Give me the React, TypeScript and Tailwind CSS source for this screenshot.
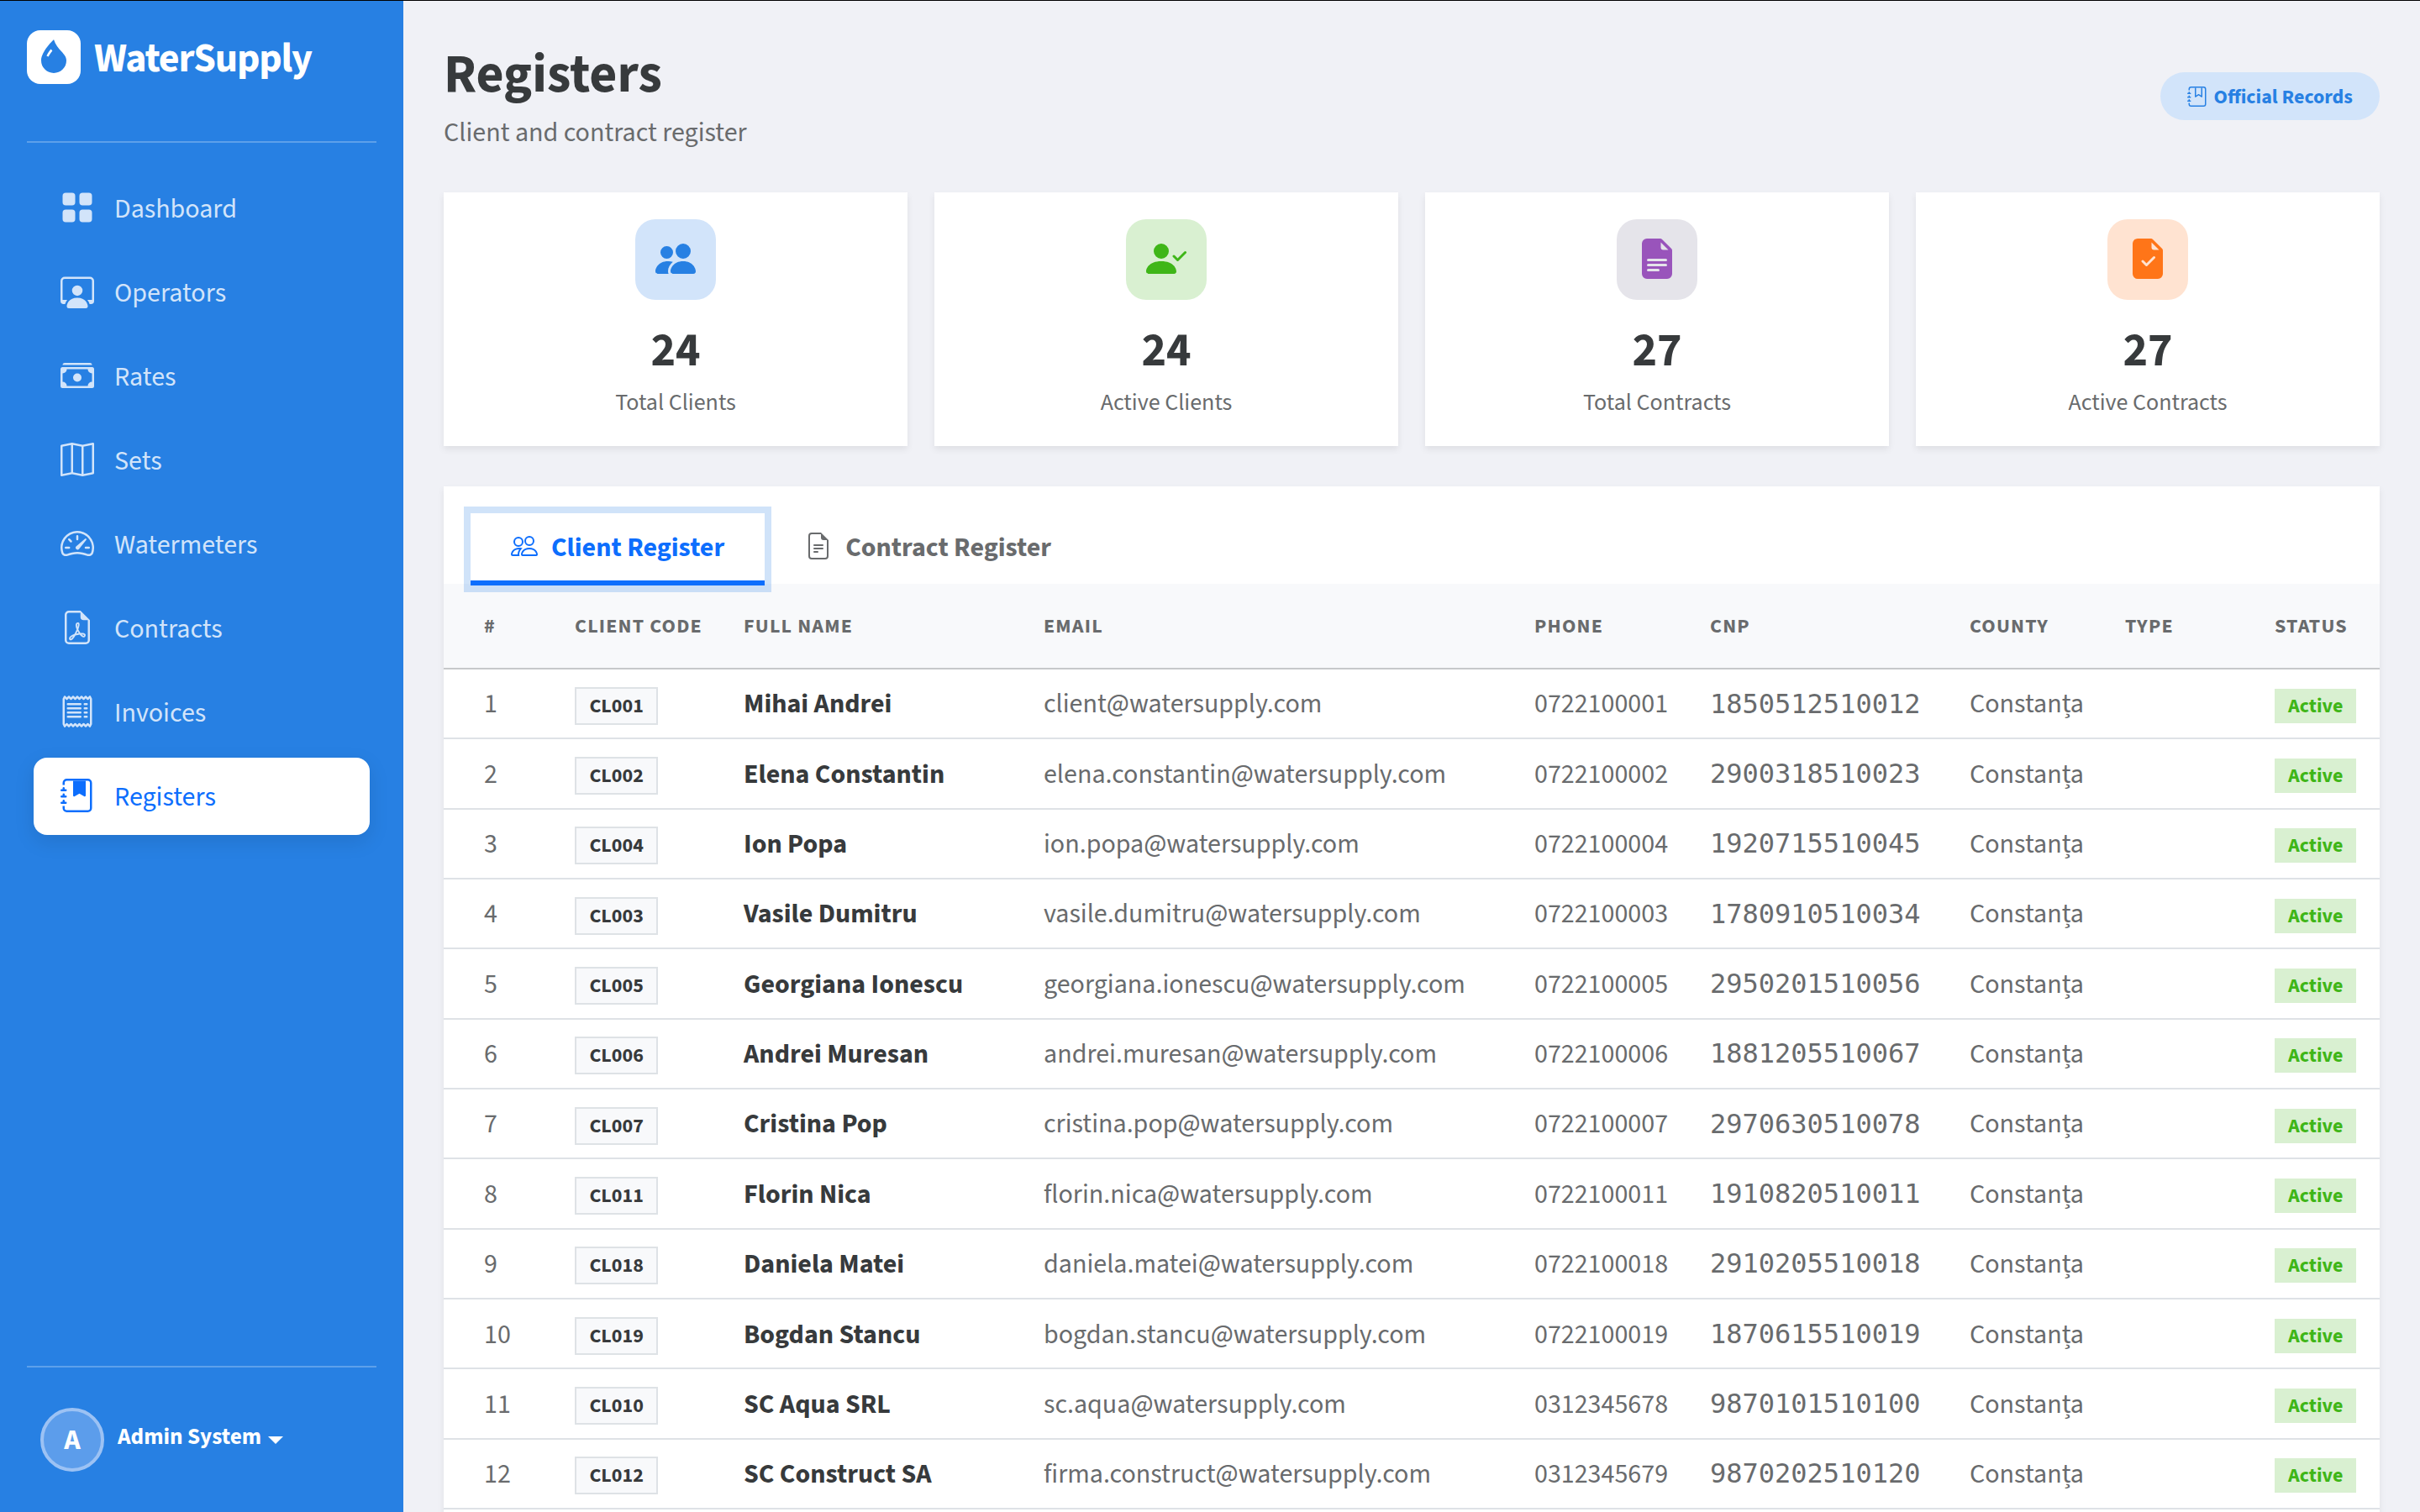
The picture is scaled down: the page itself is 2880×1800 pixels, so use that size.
import React, { useState } from 'react';
import type { IconType } from 'react-icons';
import {
  BsCashStack,
  BsDropletFill,
  BsFileEarmarkCheckFill,
  BsFileEarmarkPdf,
  BsFileEarmarkText,
  BsFileEarmarkTextFill,
  BsGridFill,
  BsJournalBookmark,
  BsJournalBookmarkFill,
  BsMap,
  BsPeople,
  BsPeopleFill,
  BsPersonCheckFill,
  BsPersonWorkspace,
  BsReceipt,
  BsSpeedometer2,
} from 'react-icons/bs';

const NAV_ITEMS: { label: string; icon: IconType }[] = [
  { label: 'Dashboard', icon: BsGridFill },
  { label: 'Operators', icon: BsPersonWorkspace },
  { label: 'Rates', icon: BsCashStack },
  { label: 'Sets', icon: BsMap },
  { label: 'Watermeters', icon: BsSpeedometer2 },
  { label: 'Contracts', icon: BsFileEarmarkPdf },
  { label: 'Invoices', icon: BsReceipt },
  { label: 'Registers', icon: BsJournalBookmarkFill },
];

const STATS: { label: string; value: number; icon: IconType; tone: string }[] = [
  { label: 'Total Clients', value: 24, icon: BsPeopleFill, tone: 'bg-[#d2e4fa] text-[#2780e3]' },
  { label: 'Active Clients', value: 24, icon: BsPersonCheckFill, tone: 'bg-[#d9f0d1] text-[#3fb618]' },
  { label: 'Total Contracts', value: 27, icon: BsFileEarmarkTextFill, tone: 'bg-[#e5e4ea] text-[#9954bb]' },
  { label: 'Active Contracts', value: 27, icon: BsFileEarmarkCheckFill, tone: 'bg-[#ffe3d1] text-[#ff7518]' },
];

const TABS: { label: string; icon: IconType }[] = [
  { label: 'Client Register', icon: BsPeople },
  { label: 'Contract Register', icon: BsFileEarmarkText },
];

const COLUMNS = ['#', 'Client Code', 'Full Name', 'Email', 'Phone', 'CNP', 'County', 'Type', 'Status'];

const CLIENTS = [
  { code: 'CL001', name: 'Mihai Andrei', email: 'client@watersupply.com', phone: '0722100001', cnp: '1850512510012' },
  { code: 'CL002', name: 'Elena Constantin', email: 'elena.constantin@watersupply.com', phone: '0722100002', cnp: '2900318510023' },
  { code: 'CL004', name: 'Ion Popa', email: 'ion.popa@watersupply.com', phone: '0722100004', cnp: '1920715510045' },
  { code: 'CL003', name: 'Vasile Dumitru', email: 'vasile.dumitru@watersupply.com', phone: '0722100003', cnp: '1780910510034' },
  { code: 'CL005', name: 'Georgiana Ionescu', email: 'georgiana.ionescu@watersupply.com', phone: '0722100005', cnp: '2950201510056' },
  { code: 'CL006', name: 'Andrei Muresan', email: 'andrei.muresan@watersupply.com', phone: '0722100006', cnp: '1881205510067' },
  { code: 'CL007', name: 'Cristina Pop', email: 'cristina.pop@watersupply.com', phone: '0722100007', cnp: '2970630510078' },
  { code: 'CL011', name: 'Florin Nica', email: 'florin.nica@watersupply.com', phone: '0722100011', cnp: '1910820510011' },
  { code: 'CL018', name: 'Daniela Matei', email: 'daniela.matei@watersupply.com', phone: '0722100018', cnp: '2910205510018' },
  { code: 'CL019', name: 'Bogdan Stancu', email: 'bogdan.stancu@watersupply.com', phone: '0722100019', cnp: '1870615510019' },
  { code: 'CL010', name: 'SC Aqua SRL', email: 'sc.aqua@watersupply.com', phone: '0312345678', cnp: '9870101510100' },
  { code: 'CL012', name: 'SC Construct SA', email: 'firma.construct@watersupply.com', phone: '0312345679', cnp: '9870202510120' },
];

const GRID = 'grid grid-cols-[108px_201px_357px_584px_209px_309px_185px_178px_1fr] items-center pl-12';

const Sidebar: React.FC = () => (
  <aside className="flex w-[480px] shrink-0 flex-col bg-[#2780e3] text-white">
    <div className="mx-8 flex h-[169px] items-start gap-4 border-b-2 border-white/25 pt-[35px]">
      <div className="flex size-16 items-center justify-center rounded-2xl bg-white text-[#2780e3]">
        <BsDropletFill className="-mt-0.5 size-10" />
      </div>
      <span className="pt-0.5 text-[48px] leading-16 font-bold tracking-[-1.2px]">WaterSupply</span>
    </div>

    <nav className="mt-8 flex flex-col gap-2 px-10">
      {NAV_ITEMS.map(({ label, icon: Icon }) => {
        const active = label === 'Registers';
        return (
          <a
            key={label}
            href="#"
            className={`flex h-[92px] items-center gap-6 rounded-2xl px-8 text-[32px] ${
              active
                ? 'bg-white text-[#0d6efd] shadow-[0_8px_24px_rgba(0,0,0,0.1)]'
                : 'text-[#d2e4fa]'
            }`}
          >
            <Icon className="-mt-0.5 size-10" />
            <span className="pt-0.5">{label}</span>
          </a>
        );
      })}
    </nav>

    <div className="mx-8 mt-auto flex h-[174px] items-start border-t-2 border-white/25 px-4 pt-12">
      <div className="flex size-[76px] items-center justify-center rounded-full border-4 border-[#9cc2f4] bg-[#5c9deb] text-[34px] font-bold">
        A
      </div>
      <span className="ml-4 pt-4 text-[27.2px] leading-[38px] font-bold">Admin System</span>
      <svg className="mt-[34px] ml-2 h-[9px] w-[18px]" viewBox="0 0 18 9" fill="currentColor">
        <path d="M0 0h18L9 9z" />
      </svg>
    </div>
  </aside>
);

const StatCards: React.FC = () => (
  <div className="grid grid-cols-4 gap-8">
    {STATS.map(({ label, value, icon: Icon, tone }) => (
      <div
        key={label}
        className="flex h-[302px] flex-col items-center bg-white pt-8 shadow-[0_4px_8px_rgba(0,0,0,0.075)]"
      >
        <div className={`flex size-24 items-center justify-center rounded-3xl ${tone}`}>
          <Icon className="-mt-0.5 size-12" />
        </div>
        <div className="mt-[27px] text-[56px] leading-[67px] font-bold">{value}</div>
        <div className="mt-[7px] text-[28px] leading-[42px] text-[#696b6d]">{label}</div>
      </div>
    ))}
  </div>
);

const ClientTable: React.FC = () => (
  <div className="text-[32px] text-[#696b6d]">
    <div className={`${GRID} h-[102px] border-b-2 border-[#c6c8ca] bg-[#f8f9fb]`}>
      {COLUMNS.map((col) => (
        <div key={col} className="pt-0.5 text-[24px] font-bold tracking-[1.2px] whitespace-nowrap uppercase">
          {col}
        </div>
      ))}
    </div>
    {CLIENTS.map((client, i) => (
      <div key={client.code} className={`${GRID} h-[83.35px] border-b-2 border-[#dee2e6] leading-[48px]`}>
        <div className="pt-[1.5px]">{i + 1}</div>
        <div className="flex pt-[5px]">
          <span className="border-2 border-[#dee2e6] bg-[#f8f9fb] px-[15.4px] pt-px text-[24px] leading-10 font-bold text-[#373a3c]">
            {client.code}
          </span>
        </div>
        <div className="pt-[1.5px] font-bold text-[#373a3c]">{client.name}</div>
        <div className="pt-[1.5px]">{client.email}</div>
        <div className="pt-[1.5px]">{client.phone}</div>
        <div className="font-['DejaVu_Sans_Mono',monospace]">{client.cnp}</div>
        <div className="pt-[1.5px]">Constanța</div>
        <div />
        <div className="flex pt-[5px]">
          <span className="bg-[#d9f0d1] px-4 pt-px text-[24px] leading-10 font-bold text-[#3fb618]">Active</span>
        </div>
      </div>
    ))}
  </div>
);

const App: React.FC = () => {
  const [tab, setTab] = useState('Client Register');

  return (
    <div className="flex h-[1800px] w-[2880px] overflow-hidden border-t border-black bg-[#f0f1f6] font-['Source_Sans_Pro','Source_Sans_3','Noto_Sans_CJK_SC',sans-serif] text-[#373a3c]">
      <Sidebar />

      <main className="flex-1 px-12 pt-12">
        {/* Page header */}
        <header className="flex h-[180px] items-start justify-between">
          <div>
            <h1 className="pt-0.5 text-[64px] leading-[77px] font-bold">Registers</h1>
            <p className="mt-1.5 text-[32px] leading-[48px] text-[#696b6d]">Client and contract register</p>
          </div>
          <span className="mt-[37px] flex h-[57px] items-center gap-2 rounded-full bg-[#d2e4fa] px-8 text-[24px] font-bold text-[#2780e3]">
            <BsJournalBookmark className="size-6" />
            <span className="pt-0.5">Official Records</span>
          </span>
        </header>

        <StatCards />

        {/* Register card */}
        <section className="mt-12 h-[1400px] bg-white shadow-[0_4px_8px_rgba(0,0,0,0.075)]">
          <div className="flex h-[116px] px-8 pt-8">
            {TABS.map(({ label, icon: Icon }) => (
              <button
                key={label}
                onClick={() => setTab(label)}
                className={`relative flex h-[86px] items-center gap-4 border-b-[6px] px-12 pb-0.5 text-[32px] font-bold ${
                  tab === label
                    ? 'border-[#0d6efd] text-[#0d6efd] shadow-[0_0_0_8px_rgba(39,128,227,0.22)]'
                    : 'border-transparent text-[#696b6d]'
                }`}
              >
                <Icon className="size-8" />
                <span className="pt-[3px]">{label}</span>
              </button>
            ))}
          </div>
          <ClientTable />
        </section>
      </main>
    </div>
  );
};

export default App;
